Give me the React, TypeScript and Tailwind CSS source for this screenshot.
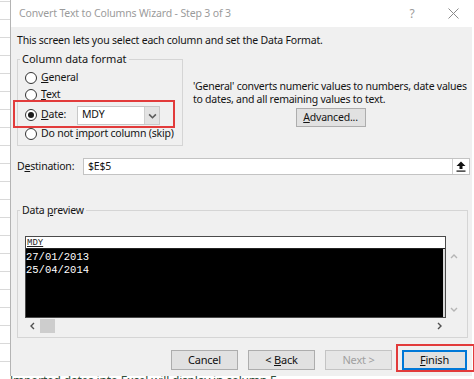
import React from "react";

function Radio({ checked }: { checked?: boolean }) {
  return (
    <span className="w-[12px] h-[12px] rounded-full border border-[#333] bg-white flex items-center justify-center shrink-0">
      {checked && <span className="w-[6px] h-[6px] rounded-full bg-[#1a1a1a]" />}
    </span>
  );
}

function Chevron({ dir, color, size = 8 }: { dir: "up" | "down" | "left" | "right"; color: string; size?: number }) {
  const pts: Record<string, string> = {
    up: "1,6 4,3 7,6",
    down: "1,3 4,6 7,3",
    left: "5,1 2,4 5,7",
    right: "3,1 6,4 3,7",
  };
  return (
    <svg width={size} height={size} viewBox="0 0 8 8">
      <polyline points={pts[dir]} fill="none" stroke={color} strokeWidth="1.4" />
    </svg>
  );
}

function Btn({ children, disabled, primary, w = "w-[67px]" }: { children: React.ReactNode; disabled?: boolean; primary?: boolean; w?: string }) {
  return (
    <div
      className={`${w} h-[20px] flex items-center justify-center text-[11px] ${
        disabled
          ? "bg-[#e6e6e6] border border-[#c4c4c4] text-[#a0a0a0]"
          : primary
          ? "bg-[#e1e1e1] border border-[#0078d7] shadow-[inset_0_0_0_1px_#0078d7] text-[#111]"
          : "bg-[#e1e1e1] border border-[#adadad] text-[#111]"
      }`}
    >
      {children}
    </div>
  );
}

export default function App() {
  const gridLines = Array.from({ length: 22 });
  return (
    <div className="w-[474px] h-[379px] bg-white overflow-hidden flex font-['Noto_Sans',sans-serif] text-[10.5px] tracking-[-0.2px] text-[#141414]">
      {/* excel grid strip */}
      <div className="w-[10px] shrink-0 flex flex-col">
        <div className="h-[2px] border-b border-[#d9d9d9] shrink-0" />
        {gridLines.map((_, i) => (
          <div key={i} className="h-[18px] border-b border-[#d9d9d9] shrink-0" />
        ))}
      </div>

      <div className="w-[462px] shrink-0 flex flex-col">
        {/* dialog */}
        <div className="h-[376px] flex flex-col border-l border-[#b4b4b4]">
          {/* title bar */}
          <div className="h-[27px] bg-white flex items-center pl-[8px] pr-[4px] shrink-0">
            <span className="text-[10.5px] tracking-[-0.15px] text-[#9b9b9b] whitespace-nowrap">Convert Text to Columns Wizard - Step 3 of 3</span>
            <span className="ml-auto w-[30px] text-center text-[12px] text-[#9b9b9b]">?</span>
            <span className="ml-[11px] w-[30px] flex items-center justify-center">
              <svg width="11" height="11" viewBox="0 0 11 11">
                <path d="M0.5 0.5 L10.5 10.5 M10.5 0.5 L0.5 10.5" stroke="#8a8a8a" strokeWidth="1" />
              </svg>
            </span>
          </div>

          {/* body */}
          <div className="flex-1 bg-[#f0f0f0] pl-[6px] flex flex-col">
            <div className="mt-[6px] h-[14px] leading-[14px] whitespace-nowrap">
              This screen lets you select each column and set the Data Format.
            </div>

            <div className="mt-[5px] flex">
              <fieldset className="w-[166px] min-w-0 border border-[#d5d5d5] pb-[4px] relative">
                <legend className="ml-[2px] px-[2px] h-[14px] leading-[14px] text-[11px] tracking-normal whitespace-nowrap">Column data format</legend>
                <div className="mt-[4px] h-[16px] flex items-center pl-[7px] gap-[4px]">
                  <Radio />
                  <span>
                    <span className="underline">G</span>eneral
                  </span>
                </div>
                <div className="mt-[1px] h-[16px] flex items-center pl-[7px] gap-[4px]">
                  <Radio />
                  <span>
                    <span className="underline">T</span>ext
                  </span>
                </div>
                <div className="h-[24px] flex items-center pl-[7px] relative">
                  <Radio checked />
                  <span className="ml-[4px]">
                    <span className="underline">D</span>ate:
                  </span>
                  <div className="ml-auto mr-[22px] w-[83px] h-[19px] bg-white border border-[#c8c8c8] flex items-center">
                    <span className="pl-[4px] flex-1">MDY</span>
                    <span className="w-[15px] h-full bg-[#e3e3e3] border-l border-[#cfcfcf] flex items-center justify-center">
                      <Chevron dir="down" color="#5a5a5a" size={9} />
                    </span>
                  </div>
                  <div className="absolute left-[-5px] top-[-3px] w-[162px] h-[28px] border-2 border-[#e23b3b] pointer-events-none" />
                </div>
                <div className="h-[14px] flex items-center pl-[7px] gap-[4px] whitespace-nowrap">
                  <Radio />
                  <span>
                    Do not <span className="underline">i</span>mport column (skip)
                  </span>
                </div>
              </fieldset>

              <div className="ml-[10px] w-[275px] mt-[28px] flex flex-col items-center">
                <div className="w-full text-[10.5px] tracking-[-0.25px] leading-[13px] whitespace-nowrap">
                  'General' converts numeric values to numbers, date values
                  <br />
                  to dates, and all remaining values to text.
                </div>
                <div className="mt-[2px] w-[70px] h-[19px] bg-[#e1e1e1] border border-[#adadad] flex items-center justify-center">
                  <span>
                    <span className="underline">A</span>dvanced...
                  </span>
                </div>
              </div>
            </div>

            {/* destination */}
            <div className="mt-[12px] flex items-center h-[17px]">
              <span className="w-[66px] whitespace-nowrap">
                D<span className="underline">e</span>stination:
              </span>
              <div className="w-[387px] h-[17px] bg-white border border-[#c3c3c3] flex items-center">
                <span className="pl-[4px] flex-1">$E$5</span>
                <span className="w-[17px] h-[15px] border-l border-[#d0d0d0] flex items-center justify-center">
                  <svg width="10" height="11" viewBox="0 0 10 11">
                    <path d="M5 0.5 L9.5 5 L6.5 5 L6.5 8 L3.5 8 L3.5 5 L0.5 5 Z" fill="#111" />
                    <rect x="0.5" y="9.5" width="9" height="1.2" fill="#111" />
                  </svg>
                </span>
              </div>
            </div>

            {/* data preview */}
            <fieldset className="mt-[28px] w-[451px] min-w-0 border border-[#d5d5d5] pb-[4px]">
              <legend className="ml-[2px] px-[2px] h-[14px] leading-[14px] whitespace-nowrap">
                Data <span className="underline">p</span>review
              </legend>
              <div className="mt-[19px] ml-[7px] flex">
                <div className="w-[421px] h-[82px] border border-[#4a4a4a] flex flex-col bg-black">
                  <div className="h-[12px] bg-white border-b border-[#222] flex items-end pl-[1px] font-['Liberation_Mono',monospace] text-[9px] tracking-normal leading-[10px] text-[#222]">
                    <span className="underline">MDY</span>
                  </div>
                  <div className="flex-1 bg-black border-r-2 border-[#d8d8d8] pt-[2px] font-['Liberation_Mono',monospace] text-[10.5px] tracking-normal leading-[13px] text-white">
                    <div>27/01/2013</div>
                    <div>25/04/2014</div>
                  </div>
                </div>
                <div className="w-[16px] flex flex-col items-center pt-[16px] pb-[5px] justify-between">
                  <Chevron dir="up" color="#b5b5b5" />
                  <Chevron dir="down" color="#b5b5b5" />
                </div>
              </div>
              <div className="mt-[1px] ml-[7px] w-[421px] h-[14px] flex items-center">
                <span className="w-[15px] flex justify-center">
                  <Chevron dir="left" color="#505050" />
                </span>
                <span className="w-[15px] h-[14px] bg-[#cdcdcd]" />
                <span className="ml-auto w-[15px] flex justify-center">
                  <Chevron dir="right" color="#505050" />
                </span>
              </div>
            </fieldset>

            {/* buttons */}
            <div className="mt-[12px] flex justify-end pr-[5px] gap-[10px]">
              <Btn>Cancel</Btn>
              <Btn>
                &lt;&nbsp;<span className="underline">B</span>ack
              </Btn>
              <Btn disabled>Next &gt;</Btn>
              <div className="relative">
                <Btn primary w="w-[65px]">
                  <span>
                    <span className="underline">F</span>inish
                  </span>
                </Btn>
                <div className="absolute left-[-6px] top-[-6px] w-[79px] h-[28px] border-2 border-[#e23b3b] pointer-events-none" />
              </div>
            </div>
          </div>
        </div>
        {/* bottom excel strip */}
        <div className="h-[3px] overflow-hidden">
          <div className="text-[12px] leading-[14px] text-[#2f4f3a] whitespace-nowrap mt-[-2px]">
            lmported dates into Excel will display in column E
          </div>
        </div>
      </div>
    </div>
  );
}
